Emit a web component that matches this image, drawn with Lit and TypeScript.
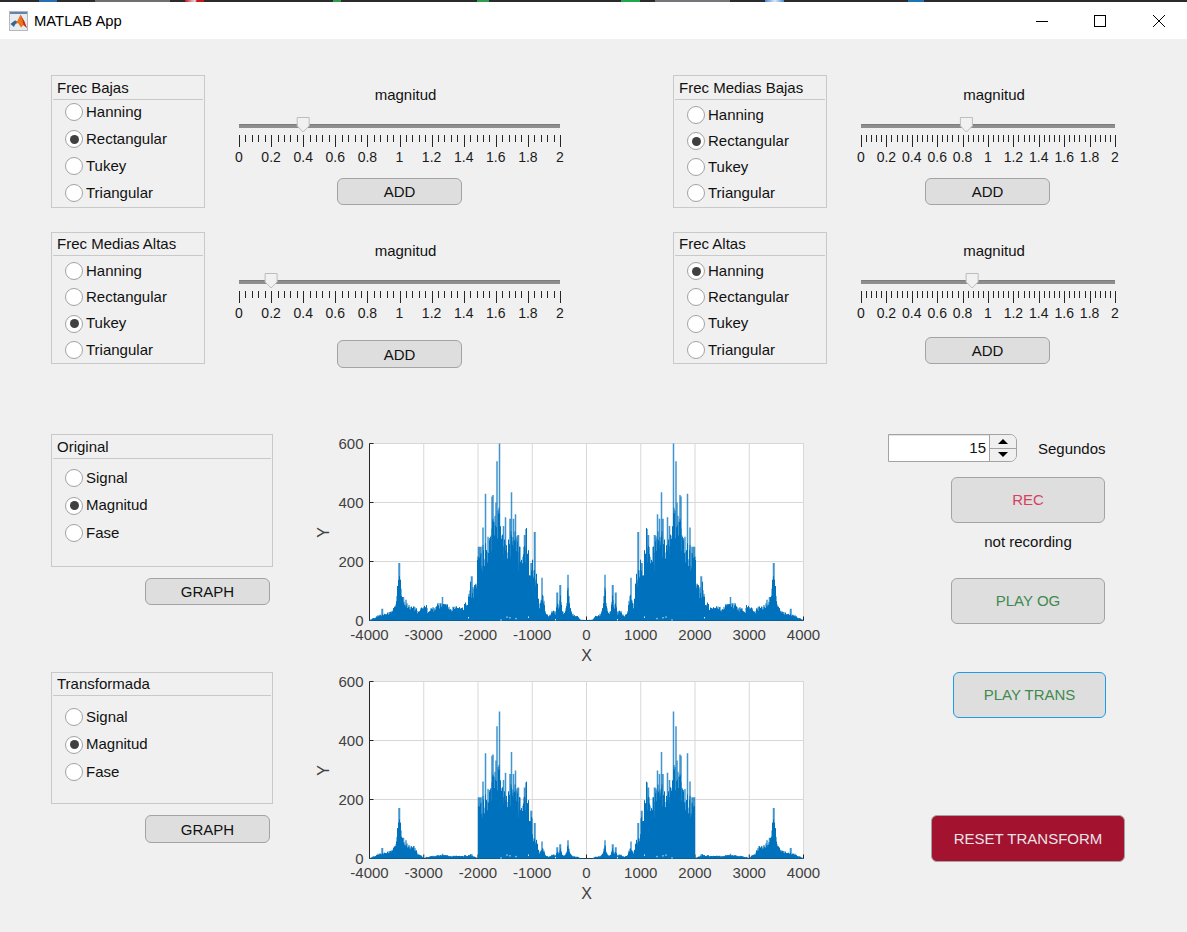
import { LitElement, html, css, svg } from 'lit';
import { customElement, property } from 'lit/decorators.js';
import { styleMap } from 'lit/directives/style-map.js';

const FONT = css`'Liberation Sans', Arial, sans-serif`;

// solid body of the spectrum, positive side only (Hz, magnitude)
const BODY: [number, number][] = [
  [0, 2], [110, 3], [150, 12], [270, 25], [310, 60], [340, 110], [370, 50], [400, 28], [450, 30],
  [483, 95], [510, 30], [540, 75], [565, 30], [610, 35], [700, 15], [760, 30], [800, 90], [830, 100],
  [860, 30], [900, 100], [930, 180], [1000, 180], [1050, 160], [1100, 275], [1150, 255], [1200, 220],
  [1300, 295], [1400, 310], [1500, 305], [1600, 370], [1700, 365], [1800, 275], [1900, 270], [2000, 230],
  [2040, 130], [2100, 115], [2150, 105], [2200, 68], [2260, 52], [2300, 42], [2400, 48], [2500, 48],
  [2600, 58], [2700, 58], [2800, 48], [2900, 36], [3000, 50], [3100, 34], [3200, 52], [3300, 58],
  [3380, 64], [3420, 130], [3450, 170], [3490, 100], [3530, 55], [3600, 30], [3700, 25], [3800, 20],
  [3900, 10], [4000, 2],
];

const SPIKES: [number, number][] = [
  [340, 155], [483, 120], [540, 95], [820, 145], [955, 300], [1020, 195], [1113, 310], [1140, 290],
  [1260, 290], [1310, 360], [1345, 345], [1382, 435], [1410, 345], [1492, 350], [1530, 320], [1605, 600],
  [1650, 540], [1665, 400], [1725, 425], [1740, 420], [1785, 280], [1860, 430], [1908, 315], [1950, 250],
  [1985, 250], [2116, 150], [2654, 80], [3327, 70], [3380, 80], [3450, 195], [3767, 40],
];

function rng(seed: number) {
  return () => {
    seed = (seed + 0x6d2b79f5) | 0;
    let t = Math.imul(seed ^ (seed >>> 15), 1 | seed);
    t = (t + Math.imul(t ^ (t >>> 7), 61 | t)) ^ t;
    return ((t ^ (t >>> 14)) >>> 0) / 4294967296;
  };
}

function bodyAt(f: number) {
  for (let i = 1; i < BODY.length; i++) {
    if (f <= BODY[i][0]) {
      const [x0, y0] = BODY[i - 1];
      const [x1, y1] = BODY[i];
      return y0 + ((y1 - y0) * (f - x0)) / (x1 - x0);
    }
  }
  return 0;
}

const PLOT_W = 434;
const PLOT_H = 177;
const SAMPLES = PLOT_W; // per side, so two per pixel

interface Sample { f: number; mag: number; spike: number; gap: number; }

const spectrum: Sample[] = (() => {
  const rand = rng(7);
  const out: Sample[] = [];
  for (let i = 0; i <= SAMPLES; i++) {
    const f = (i / SAMPLES) * 4000;
    let mag = bodyAt(f) * (0.62 + 0.42 * rand());
    if (rand() < 0.09) mag *= 1.18;
    let spike = 0;
    for (const [sf, sv] of SPIKES) {
      if (Math.abs(sf - f) < 7) spike = Math.max(spike, sv);
    }
    const gap = f > 450 && f < 2200 && rand() < 0.05 ? 4 + rand() * 10 : 0;
    out.push({ f, mag, spike, gap });
  }
  return out;
})();

// what the filter settings do to each band
function transformGain(f: number) {
  if (f < 1000) return 0.4;
  if (f < 2000) return 0.83;
  if (f < 3000) return 0.2 * Math.min(1, (f - 2000) / 250) * Math.min(1, (3000 - f) / 100);
  return 0.88 * Math.min(1, (f - 3000) / 180);
}

function buildPaths(gain: (f: number) => number) {
  const px = (hz: number) => PLOT_W / 2 + (hz / 8000) * PLOT_W;
  const py = (v: number) => Math.max(0, PLOT_H - (v / 600) * PLOT_H);
  let line = '';
  let spikes = '';
  let gaps = '';
  for (const s of spectrum) {
    const g = gain(s.f);
    for (const dir of [-1, 1]) {
      const x = px(dir * s.f).toFixed(2);
      line += `M${x} ${PLOT_H}V${py(s.mag * g).toFixed(1)}`;
      if (s.spike) spikes += `M${x} ${PLOT_H}V${py(s.spike * g).toFixed(1)}`;
      if (s.gap && g > 0.3) gaps += `M${x} ${py(s.gap).toFixed(1)}v1.4`;
    }
  }
  return { line, spikes, gaps };
}

@customElement('spectrum-plot')
export class SpectrumPlot extends LitElement {
  static styles = css`
    :host { display: block; }
    svg { display: block; font-family: ${FONT}; font-size: 15px; }
    .grid { stroke: #d8d8d8; stroke-width: 1; }
    .axis { stroke: #262626; stroke-width: 1; fill: none; }
    .curve { stroke: #0072bd; stroke-width: 1; fill: none; }
    .spikes { stroke: #0072bd; stroke-width: 1.5; stroke-opacity: 0.75; fill: none; }
    .gaps { stroke: #ffffff; stroke-width: 0.9; fill: none; }
    text { fill: #404040; }
    .name { font-size: 16px; }
  `;

  @property({ type: Boolean }) transformed = false;

  render() {
    const { line, spikes, gaps } = buildPaths(this.transformed ? transformGain : () => 1);
    const xs = [-4000, -3000, -2000, -1000, 0, 1000, 2000, 3000, 4000];
    const ys = [0, 200, 400, 600];
    const x = (v: number) => ((v + 4000) / 8000) * PLOT_W;
    const y = (v: number) => PLOT_H - (v / 600) * PLOT_H;
    return html`
      <svg width="530" height="236" viewBox="0 0 530 236">
        <g transform="translate(59.5 9.5)">
          <rect width=${PLOT_W} height=${PLOT_H} fill="#fff" stroke="#d8d8d8"></rect>
          ${xs.slice(1, -1).map(v => svg`<line class="grid" x1=${x(v)} x2=${x(v)} y1="0" y2=${PLOT_H}></line>`)}
          ${ys.slice(1, -1).map(v => svg`<line class="grid" x1="0" x2=${PLOT_W} y1=${y(v)} y2=${y(v)}></line>`)}
          <path class="axis" d="M0 0V${PLOT_H}H${PLOT_W}"></path>
          ${xs.map(v => svg`<line class="axis" x1=${x(v)} x2=${x(v)} y1=${PLOT_H} y2=${PLOT_H - 4}></line>`)}
          ${ys.map(v => svg`<line class="axis" x1="0" x2="4" y1=${y(v)} y2=${y(v)}></line>`)}
          <path class="spikes" d=${spikes}></path>
          <path class="curve" d=${line}></path>
          <path class="gaps" d=${gaps}></path>
          ${xs.map(v => svg`<text x=${x(v)} y=${PLOT_H + 19} text-anchor="middle">${v}</text>`)}
          ${ys.map(v => svg`<text x="-6" y=${y(v) + 5} text-anchor="end">${v}</text>`)}
          <text class="name" x=${PLOT_W / 2} y=${PLOT_H + 40} text-anchor="middle">X</text>
          <text class="name" transform="translate(-41 89) rotate(-90)" text-anchor="middle">Y</text>
        </g>
      </svg>
    `;
  }
}

@customElement('tick-slider')
export class TickSlider extends LitElement {
  static styles = css`
    :host { display: block; }
    svg { display: block; font-family: ${FONT}; font-size: 14px; }
    text { fill: #1a1a1a; }
    .tick { stroke: #262626; stroke-width: 1; }
    .thumb { fill: #f1f1f1; stroke: #bdbdbd; stroke-width: 1; }
  `;

  @property({ type: Number }) span = 321;
  @property({ type: Number }) value = 0;

  render() {
    const pad = 8;
    const ticks = Array.from({ length: 51 }, (_, i) => i);
    const labels = [0, 0.2, 0.4, 0.6, 0.8, 1, 1.2, 1.4, 1.6, 1.8, 2];
    const at = (v: number) => (v / 2) * this.span;
    const tx = at(this.value);
    return html`
      <svg width=${this.span + pad * 2} height="56" viewBox="0 0 ${this.span + pad * 2} 56">
        <g transform="translate(${pad} 0)">
          <rect y="14" width=${this.span} height="4" fill="#8e8e8e"></rect>
          <rect y="14" width=${this.span} height="1" fill="#7d7d7d"></rect>
          ${ticks.map(i => {
            const px = Math.round((i / 50) * this.span) + 0.5;
            return svg`<line class="tick" x1=${px} x2=${px} y1="25" y2=${i % 5 === 0 ? 37 : 32}></line>`;
          })}
          <path class="thumb" transform="translate(${tx} 0)" d="M-6 7.5H6V16L0 22L-6 16Z"></path>
          ${labels.map(v => svg`<text x=${at(v)} y="52" text-anchor="middle">${v}</text>`)}
        </g>
      </svg>
    `;
  }
}

@customElement('radio-panel')
export class RadioPanel extends LitElement {
  static styles = css`
    :host {
      display: block;
      box-sizing: border-box;
      border: 1px solid #c9c9c9;
      font: 15px ${FONT};
      color: #111;
    }
    .title {
      padding-left: 4px;
      margin: 0 1px;
      border-bottom: 1px solid #c9c9c9;
    }
    .rows {
      display: flex;
      flex-direction: column;
      padding-left: 13px;
    }
    .row {
      display: flex;
      align-items: center;
      gap: 3px;
      height: 24px;
      cursor: default;
    }
    .label { margin-top: -2px; }
    .dot {
      box-sizing: border-box;
      width: 18px;
      height: 18px;
      border: 1px solid #a3a3a3;
      border-radius: 50%;
      background: #fff;
      display: flex;
      align-items: center;
      justify-content: center;
    }
    .dot.on::after {
      content: '';
      width: 9px;
      height: 9px;
      border-radius: 50%;
      background: #404040;
    }
  `;

  @property() heading = '';
  @property({ type: Array }) options: string[] = [];
  @property() selected = '';
  @property({ type: Number }) titleH = 23;
  @property({ type: Number }) pad = 0;
  @property({ type: Number }) gap = 3;

  render() {
    const title = { height: `${this.titleH}px`, lineHeight: `${this.titleH}px` };
    const rows = { paddingTop: `${this.pad}px`, gap: `${this.gap}px` };
    return html`
      <div class="title" style=${styleMap(title)}>${this.heading}</div>
      <div class="rows" style=${styleMap(rows)}>
        ${this.options.map(o => html`
          <div class="row" @click=${() => (this.selected = o)}>
            <span class="dot ${o === this.selected ? 'on' : ''}"></span>
            <span class="label">${o}</span>
          </div>
        `)}
      </div>
    `;
  }
}

const WINDOWS = ['Hanning', 'Rectangular', 'Tukey', 'Triangular'];
const VIEWS = ['Signal', 'Magnitud', 'Fase'];

interface FilterCfg {
  heading: string;
  selected: string;
  value: number;
  span: number;
  panelH: number;
  titleH: number;
  pad: number;
  gap: number;
  top: number;
  addLeft: number;
  addTop: number;
  addH: number;
}

const FILTERS: FilterCfg[] = [
  { heading: 'Frec Bajas', selected: 'Rectangular', value: 0.4, span: 321, panelH: 133, titleH: 23, pad: 0, gap: 3, top: 11, addLeft: 106, addTop: 12, addH: 27 },
  { heading: 'Frec Medias Bajas', selected: 'Rectangular', value: 0.83, span: 254, panelH: 133, titleH: 23, pad: 3, gap: 2, top: 11, addLeft: 72, addTop: 12, addH: 27 },
  { heading: 'Frec Medias Altas', selected: 'Tukey', value: 0.2, span: 321, panelH: 132, titleH: 22, pad: 3, gap: 2.4, top: 10, addLeft: 106, addTop: 18, addH: 28 },
  { heading: 'Frec Altas', selected: 'Hanning', value: 0.875, span: 254, panelH: 132, titleH: 22, pad: 3, gap: 2.4, top: 10, addLeft: 72, addTop: 15, addH: 27 },
];

@customElement('app-root')
export class AppRoot extends LitElement {
  static styles = css`
    :host {
      display: block;
      width: 1187px;
      height: 932px;
      overflow: hidden;
      background: #f0f0f0;
      font: 15px ${FONT};
      color: #111;
    }

    .strip {
      height: 2px;
      background: linear-gradient(90deg,
        #2b2b2e 39px, #2a6fb5 39px, #2a6fb5 57px, #2b2b2e 57px,
        #2b2b2e 95px, #6f6f72 95px, #6f6f72 170px, #2b2b2e 170px,
        #2b2b2e 185px, #c8141c 185px, #e8e0e0 195px, #c8141c 197px, #c8141c 204px, #2b2b2e 204px,
        #2b2b2e 333px, #2e9e4a 333px, #2e9e4a 341px, #2b2b2e 341px,
        #2b2b2e 477px, #2e9e4a 477px, #2e9e4a 489px, #2b2b2e 489px,
        #2b2b2e 621px, #1fa64f 621px, #1fa64f 640px, #2b2b2e 640px,
        #2b2b2e 655px, #75757a 655px, #75757a 730px, #2b2b2e 730px,
        #2b2b2e 765px, #4a86d8 765px, #dfe8f5 775px, #4a86d8 784px, #2b2b2e 784px,
        #2b2b2e 908px, #1f74b8 908px, #1f74b8 924px, #2b2b2e 924px);
    }

    .titlebar {
      height: 37px;
      background: #fff;
      display: flex;
      align-items: center;
      padding-left: 9px;
      font-size: 14.8px;
      color: #000;
    }
    .app-icon { margin-right: 6px; flex: none; }
    .app-name { flex: 1; }
    .win-btn {
      width: 58.5px;
      height: 37px;
      display: flex;
      align-items: center;
      justify-content: center;
    }
    .win-btns { display: flex; margin-right: -1px; }

    .content { padding: 36px 0 0 51px; }

    .filters {
      display: grid;
      grid-template-columns: 622px auto;
      row-gap: 24px;
    }
    .filter {
      display: flex;
      align-items: flex-start;
    }
    .filter radio-panel { width: 154px; flex: none; box-sizing: border-box; }
    .slider-box {
      margin-left: 26px;
      display: flex;
      flex-direction: column;
      align-items: center;
    }
    .slider-box button { align-self: flex-start; width: 125px; }
    .caption {
      height: 18px;
      line-height: 18px;
      padding-left: 12px;
      margin-bottom: 6px;
    }

    .lower {
      display: flex;
      margin-top: 66px;
    }
    .plots {
      display: flex;
      flex-direction: column;
      gap: 2px;
    }
    .plot-row { display: flex; }
    .view-col { width: 222px; margin-right: 37px; }
    .view-col button { margin: 11px 0 0 94px; width: 125px; }

    .controls {
      margin-left: 48px;
      display: flex;
      flex-direction: column;
      align-items: flex-start;
    }
    .duration { display: flex; align-items: center; gap: 21px; height: 28px; }
    .spinner {
      box-sizing: border-box;
      width: 129px;
      height: 28px;
      display: flex;
      border: 1px solid #a3a3a3;
      border-radius: 0 7px 7px 0;
      overflow: hidden;
    }
    .spin-value {
      flex: 1;
      background: #fff;
      box-shadow: inset 0 2px 0 -1px #e4e4e4;
      text-align: right;
      padding-right: 3px;
      line-height: 26px;
    }
    .spin-arrows {
      width: 26px;
      border-left: 1px solid #a3a3a3;
      display: flex;
      flex-direction: column;
      background: #f0f0f0;
    }
    .spin-arrows span {
      flex: 1;
      display: flex;
      align-items: center;
      justify-content: center;
    }
    .spin-arrows span + span { border-top: 1px solid #a3a3a3; }
    .up { width: 0; height: 0; border: 5px solid transparent; border-top: 0; border-bottom: 5px solid #000; }
    .down { width: 0; height: 0; border: 5px solid transparent; border-bottom: 0; border-top: 5px solid #000; }

    button {
      box-sizing: border-box;
      display: block;
      padding: 0;
      background: #dedede;
      border: 1px solid #a3a3a3;
      border-radius: 6px;
      font: 15px ${FONT};
      color: #111;
    }
    .big { width: 154px; height: 46px; padding-bottom: 2px; }
    .rec { margin: 15px 0 0 63px; color: #d8405f; }
    .status {
      width: 154px;
      margin: 10px 0 0 63px;
      height: 18px;
      line-height: 18px;
      text-align: center;
    }
    .play { color: #3f8a4e; }
    .og { margin: 27px 0 0 63px; }
    .trans { margin: 48px 0 0 65px; width: 153px; border-color: #1e9be8; }
    .reset {
      margin: 97px 0 0 43px;
      width: 194px;
      height: 47px;
      background: #a3122f;
      color: #ece4e8;
    }
  `;

  private renderFilter(f: FilterCfg) {
    const add = { height: `${f.addH}px`, margin: `${f.addTop}px 0 0 ${f.addLeft}px` };
    return html`
      <div class="filter">
        <radio-panel
          style=${styleMap({ height: `${f.panelH}px` })}
          .heading=${f.heading}
          .options=${WINDOWS}
          .selected=${f.selected}
          .titleH=${f.titleH}
          .pad=${f.pad}
          .gap=${f.gap}
        ></radio-panel>
        <div class="slider-box" style=${styleMap({ marginTop: `${f.top}px` })}>
          <div class="caption">magnitud</div>
          <tick-slider .span=${f.span} .value=${f.value}></tick-slider>
          <button style=${styleMap(add)}>ADD</button>
        </div>
      </div>
    `;
  }

  private renderPlotRow(heading: string, panelH: number, titleH: number, pad: number, btnH: number, transformed: boolean) {
    return html`
      <div class="plot-row">
        <div class="view-col">
          <radio-panel
            style=${styleMap({ height: `${panelH}px` })}
            .heading=${heading}
            .options=${VIEWS}
            selected="Magnitud"
            .titleH=${titleH}
            .pad=${pad}
            .gap=${3.5}
          ></radio-panel>
          <button style=${styleMap({ height: `${btnH}px` })}>GRAPH</button>
        </div>
        <spectrum-plot ?transformed=${transformed}></spectrum-plot>
      </div>
    `;
  }

  render() {
    return html`
      <div class="strip"></div>
      <div class="titlebar">
        <svg class="app-icon" width="19" height="20" viewBox="0 0 19 20">
          <rect x="0.5" y="0.5" width="18" height="19" fill="#e9ecef" stroke="#b4b8bd"></rect>
          <rect x="1" y="1" width="17" height="2" fill="#5f86ad"></rect>
          <path d="M1.5 13L6 9.5L8 10.5L11.5 3.5L18 17L14.5 14L12 16.5L9 12L6 13.5Z" fill="#e8761c"></path>
          <path d="M11.5 3.5L13.5 9L14.5 14L18 17L15.5 10.5Z" fill="#c4311a"></path>
          <path d="M1.5 13L6 9.5L8 10.5L6 13.5L5 16Z" fill="#2a66a6"></path>
        </svg>
        <span class="app-name">MATLAB App</span>
        <div class="win-btns">
          <div class="win-btn">
            <svg width="12" height="12" viewBox="0 0 12 12"><path d="M0 6.5H12" stroke="#000" fill="none"></path></svg>
          </div>
          <div class="win-btn">
            <svg width="12" height="12" viewBox="0 0 12 12"><rect x="0.5" y="0.5" width="11" height="11" stroke="#000" fill="none"></rect></svg>
          </div>
          <div class="win-btn">
            <svg width="12" height="12" viewBox="0 0 12 12"><path d="M0 0L12 12M12 0L0 12" stroke="#000" fill="none"></path></svg>
          </div>
        </div>
      </div>

      <div class="content">
        <section class="filters">
          ${FILTERS.map(f => this.renderFilter(f))}
        </section>

        <section class="lower">
          <div class="plots">
            ${this.renderPlotRow('Original', 133, 23, 7, 27, false)}
            ${this.renderPlotRow('Transformada', 132, 22, 9, 28, true)}
          </div>
          <div class="controls">
            <div class="duration">
              <div class="spinner">
                <div class="spin-value">15</div>
                <div class="spin-arrows">
                  <span><i class="up"></i></span>
                  <span><i class="down"></i></span>
                </div>
              </div>
              <span>Segundos</span>
            </div>
            <button class="big rec">REC</button>
            <div class="status">not recording</div>
            <button class="big play og">PLAY OG</button>
            <button class="big play trans">PLAY TRANS</button>
            <button class="reset">RESET TRANSFORM</button>
          </div>
        </section>
      </div>
    `;
  }
}
